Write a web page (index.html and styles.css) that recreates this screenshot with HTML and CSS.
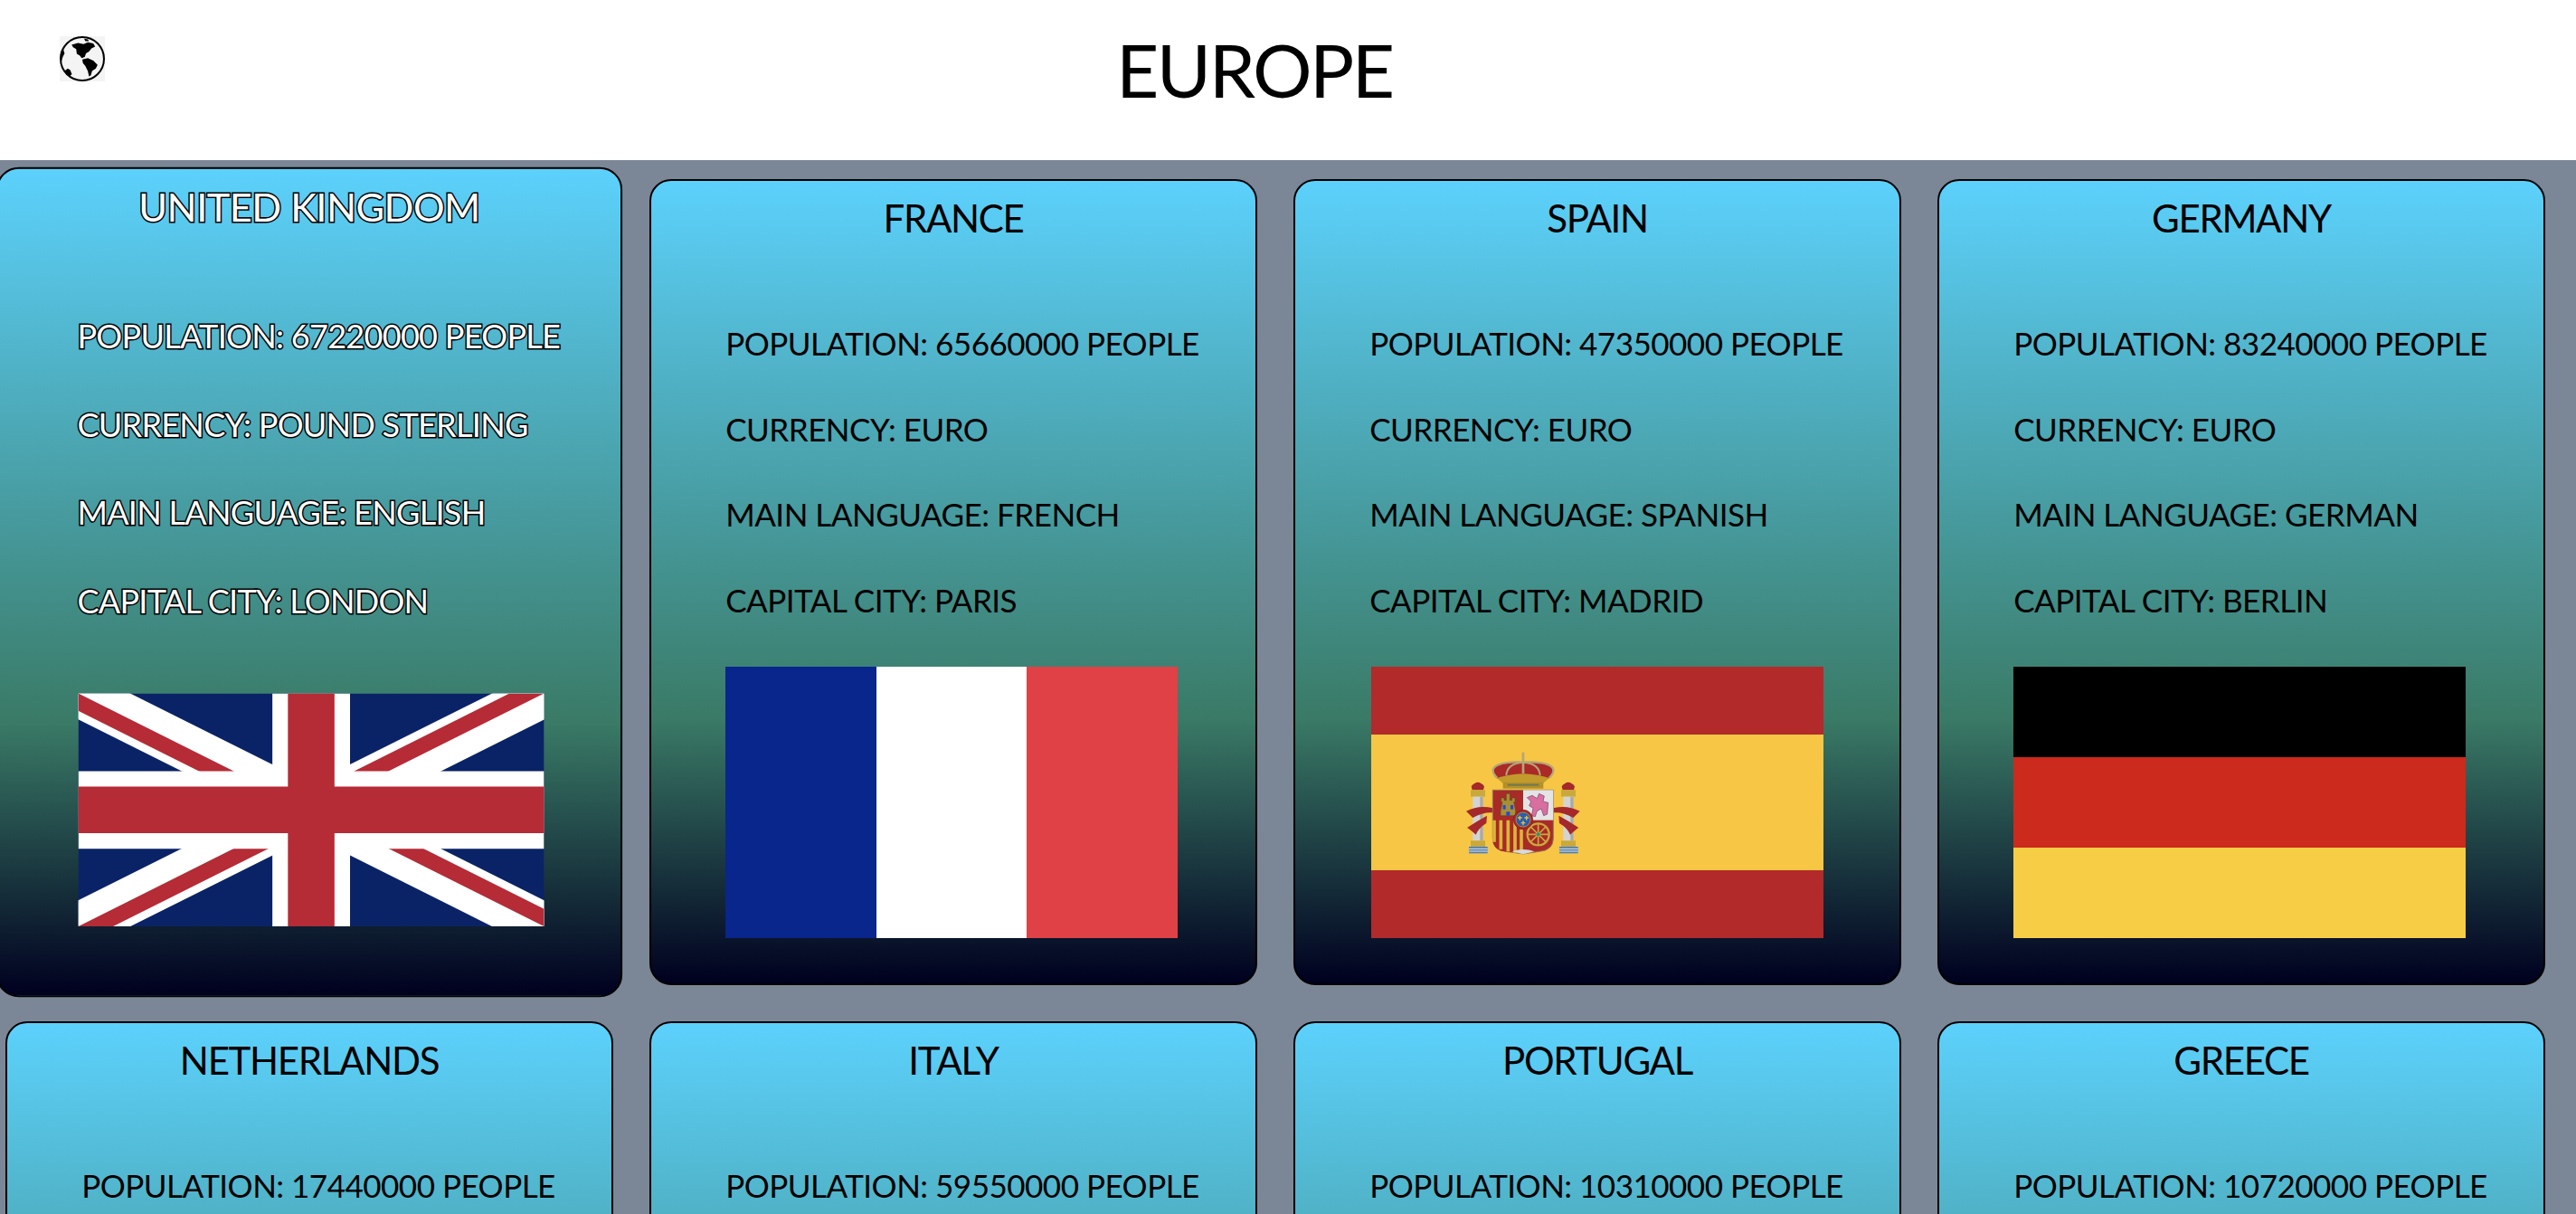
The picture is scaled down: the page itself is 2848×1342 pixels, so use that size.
FILE: index.html
```html
<!DOCTYPE html>
<html>
<head>
<title>Europe</title>
<link rel="stylesheet" href="styles.css">
</head>
<body>

<header class="topbar">
  <svg class="globe" viewBox="80 62 148 148">
    <rect x="80" y="62" width="148" height="148" fill="#f4f4f4"/>
    <circle cx="154" cy="136" r="71" fill="#f4f4f4" stroke="#000" stroke-width="6"/>
    <path d="M119 90 L140 84 L158 88 L172 82 L190 86 L196 96 L184 102 L176 112 L166 118 L162 130 L152 134 L146 126 L136 120 L134 104 L124 98 Z" fill="#000"/>
    <path d="M154 138 L172 134 L190 142 L204 156 L198 168 L186 176 L182 190 L176 194 L172 176 L164 160 L156 150 Z" fill="#000"/>
    <path d="M84 112 L92 106 L96 118 L90 130 L86 144 L82 132 Z" fill="#000"/>
    <path d="M96 176 L106 168 L114 172 L120 186 L112 194 L102 188 Z" fill="#000"/>
    <path d="M160 70 L172 72 L176 78 L164 78 Z" fill="#000"/>
  </svg>
  <h1 class="pagetitle">EUROPE</h1>
</header>

<main class="countries">

  <section class="card card-hover">
    <h2 class="cardname">UNITED KINGDOM</h2>
    <ul class="facts">
      <li>POPULATION: 67220000 PEOPLE</li>
      <li>CURRENCY: POUND STERLING</li>
      <li>MAIN LANGUAGE: ENGLISH</li>
      <li>CAPITAL CITY: LONDON</li>
    </ul>
    <div class="flagbox">
      <svg class="flag flag-uk" viewBox="0 0 60 30">
        <clipPath id="ukclip"><path d="M30 15H60V30ZV30H0ZH0V0ZV0H60Z"/></clipPath>
        <rect width="60" height="30" fill="#0a2366"/>
        <path d="M0 0L60 30M60 0L0 30" stroke="#fff" stroke-width="6"/>
        <path d="M0 0L60 30M60 0L0 30" stroke="#b52b36" stroke-width="4" clip-path="url(#ukclip)"/>
        <path d="M30 0V30M0 15H60" stroke="#fff" stroke-width="10"/>
        <path d="M30 0V30M0 15H60" stroke="#b52b36" stroke-width="6"/>
      </svg>
    </div>
  </section>

  <section class="card">
    <h2 class="cardname">FRANCE</h2>
    <ul class="facts">
      <li>POPULATION: 65660000 PEOPLE</li>
      <li>CURRENCY: EURO</li>
      <li>MAIN LANGUAGE: FRENCH</li>
      <li>CAPITAL CITY: PARIS</li>
    </ul>
    <div class="flagbox"><div class="flag flag-fr"><i></i><i></i><i></i></div></div>
  </section>

  <section class="card">
    <h2 class="cardname">SPAIN</h2>
    <ul class="facts">
      <li>POPULATION: 47350000 PEOPLE</li>
      <li>CURRENCY: EURO</li>
      <li>MAIN LANGUAGE: SPANISH</li>
      <li>CAPITAL CITY: MADRID</li>
    </ul>
    <div class="flagbox">
      <svg class="flag" viewBox="0 0 500 300">
        <rect width="500" height="300" fill="#b22a2a"/>
        <rect y="75" width="500" height="150" fill="#f7c644"/>
        <g transform="translate(44 63) scale(.3333)">
          <!-- pillars -->
          <g id="pillar">
            <path d="M200 208 Q222 180 243 208 L240 220 H203 Z" fill="#a5282a"/>
            <rect x="198" y="220" width="48" height="22" fill="#c9a93c"/>
            <rect x="205" y="242" width="34" height="146" fill="#d3d3d3"/>
            <rect x="229" y="242" width="10" height="146" fill="#a9a9a9"/>
            <rect x="198" y="388" width="48" height="20" fill="#c9a93c"/>
            <rect x="192" y="408" width="62" height="22" fill="#4c7fb5"/>
            <path d="M192 415H254M192 423H254" stroke="#e8e8e8" stroke-width="3"/>
          </g>
          <use href="#pillar" x="300"/>
          <!-- ribbons -->
          <path d="M183 290 Q225 268 272 280 V295 Q240 292 205 312 Z" fill="#a5282a"/>
          <path d="M186 345 Q215 325 252 305 L250 330 Q225 345 215 368 Q195 350 186 345 Z" fill="#a5282a"/>
          <path d="M560 290 Q518 268 472 280 V295 Q504 292 538 312 Z" fill="#a5282a"/>
          <path d="M556 345 Q528 325 490 305 L492 330 Q518 345 528 368 Q548 350 556 345 Z" fill="#a5282a"/>
          <!-- shield -->
          <path d="M271 220H472V380Q472 420 425 424L372 432 315 424Q271 420 271 380Z" fill="#a92a27" stroke="#8f7b4e" stroke-width="3"/>
          <rect x="372" y="220" width="100" height="100" fill="#e4e4e4"/>
          <path d="M271 320H372V430L315 424Q271 420 271 380Z" fill="#a92a27"/>
          <path d="M276 320V392M298 320V416M322 320V424M345 320V428M366 350V428" stroke="#d9b53a" stroke-width="11" fill="none"/>
          <!-- castle -->
          <path d="M297 305V290L303 260H299V246H309V254H316V232H328V254H335V246H345V260H341L347 290V305Z" fill="#a88f34" stroke="#5e5222" stroke-width="2"/>
          <rect x="305" y="270" width="9" height="14" fill="#2448d8"/>
          <rect x="330" y="270" width="9" height="14" fill="#2448d8"/>
          <rect x="316" y="292" width="12" height="13" fill="#2448d8"/>
          <!-- lion -->
          <path d="M385 245 L402 238 L418 248 L425 232 L442 240 L438 258 L455 262 L452 300 L440 305 L432 282 L418 290 L412 308 L400 305 L405 280 L392 272 L398 258 Z" fill="#d86f9f" stroke="#7a3a6a" stroke-width="2"/>
          <!-- navarre chain -->
          <circle cx="422" cy="367" r="36" fill="none" stroke="#c9a93c" stroke-width="7"/>
          <path d="M422 331V403M386 367H458M397 342L447 392M447 342L397 392" stroke="#c9a93c" stroke-width="5"/>
          <circle cx="422" cy="367" r="6" fill="#2f8f7a"/>
          <!-- bottom point -->
          <path d="M335 424Q372 410 410 424L372 433Z" fill="#d9d9d9"/>
          <!-- center -->
          <circle cx="372" cy="318" r="32" fill="#a92a27" stroke="#6f1e1e" stroke-width="2"/>
          <circle cx="372" cy="318" r="24" fill="#2a5db0" stroke="#c9a93c" stroke-width="2"/>
          <path d="M361 305V320M383 305V320M372 322V337M354 312H368M376 312H390M365 329H379" stroke="#e6c13c" stroke-width="4"/>
          <!-- crown -->
          <path d="M280 178Q262 150 290 136 320 125 372 128 425 125 455 136 485 150 462 178L440 192H305Z" fill="#a92a27"/>
          <path d="M286 180Q256 150 290 136 320 125 372 128 425 125 455 136 488 150 458 180" fill="none" stroke="#b4a678" stroke-width="7"/>
          <path d="M372 128Q318 132 316 172M372 128Q426 132 428 172" fill="none" stroke="#b4a678" stroke-width="6"/>
          <path d="M372 95V165" stroke="#b4a678" stroke-width="8"/>
          <path d="M285 180Q325 168 372 166 420 168 458 180L438 198H305Z" fill="#c29b2c"/>
          <rect x="305" y="195" width="134" height="20" fill="#b58f28"/>
          <rect x="320" y="200" width="104" height="6" fill="#6b7a52"/>
        </g>
      </svg>
    </div>
  </section>

  <section class="card">
    <h2 class="cardname">GERMANY</h2>
    <ul class="facts">
      <li>POPULATION: 83240000 PEOPLE</li>
      <li>CURRENCY: EURO</li>
      <li>MAIN LANGUAGE: GERMAN</li>
      <li>CAPITAL CITY: BERLIN</li>
    </ul>
    <div class="flagbox"><div class="flag flag-de"><i></i><i></i><i></i></div></div>
  </section>

  <section class="card">
    <h2 class="cardname">NETHERLANDS</h2>
    <ul class="facts">
      <li>POPULATION: 17440000 PEOPLE</li>
      <li>CURRENCY: EURO</li>
      <li>MAIN LANGUAGE: DUTCH</li>
      <li>CAPITAL CITY: AMSTERDAM</li>
    </ul>
  </section>

  <section class="card">
    <h2 class="cardname">ITALY</h2>
    <ul class="facts">
      <li>POPULATION: 59550000 PEOPLE</li>
      <li>CURRENCY: EURO</li>
      <li>MAIN LANGUAGE: ITALIAN</li>
      <li>CAPITAL CITY: ROME</li>
    </ul>
  </section>

  <section class="card">
    <h2 class="cardname">PORTUGAL</h2>
    <ul class="facts">
      <li>POPULATION: 10310000 PEOPLE</li>
      <li>CURRENCY: EURO</li>
      <li>MAIN LANGUAGE: PORTUGUESE</li>
      <li>CAPITAL CITY: LISBON</li>
    </ul>
  </section>

  <section class="card">
    <h2 class="cardname">GREECE</h2>
    <ul class="facts">
      <li>POPULATION: 10720000 PEOPLE</li>
      <li>CURRENCY: EURO</li>
      <li>MAIN LANGUAGE: GREEK</li>
      <li>CAPITAL CITY: ATHENS</li>
    </ul>
  </section>

</main>

</body>
</html>
```

FILE: styles.css
```css
html, body { margin: 0; height: 100%; overflow: hidden; }
body { background: #7b8797; color: #000; font-family: "Lato", "Liberation Sans", sans-serif; }

.topbar { display: flex; align-items: flex-start; height: 177px; background: #fff; padding-left: 66px; box-sizing: border-box; }
.globe { display: block; width: 50px; height: 50px; margin-top: 40px; }
.pagetitle { margin: 26px 0 0 1118px; font-size: 82px; line-height: 100px; font-weight: 400; letter-spacing: -2.5px; }

.countries { display: grid; grid-template-columns: repeat(4, 672px); gap: 40px; padding: 21px 34px 40px 6px; }

.card { box-sizing: border-box; height: 891px; border: 2px solid #000; border-radius: 24px;
        background: linear-gradient(#5cd1fc, #3a7a66 67%, #00001f); }
.card-hover { transform: scale(1.03); color: #fff; }
.card-hover .cardname, .card-hover .facts { -webkit-text-stroke: 3px #000; paint-order: stroke fill; }
.card-hover .cardname { letter-spacing: -.5px; }
.card-hover .facts { letter-spacing: -.7px; }

.cardname { margin: 0; padding-top: 16px; text-align: center; font-size: 42px; line-height: 50px; font-weight: 400; letter-spacing: -1.3px; }

.facts { display: flex; flex-direction: column; gap: 54.5px; width: fit-content; margin: 93px auto 0; padding: 0 0 0 20px; list-style: none;
         font-size: 35px; line-height: 40px; letter-spacing: -.5px; }

.flagbox { display: flex; justify-content: center; margin-top: 54px; }
.flag { display: block; width: 500px; height: 300px; }
.flag-uk { height: 250px; margin: 26px 0 24px 4px; }
.flag-fr { display: flex; margin-left: -4px; }
.flag-fr i { flex: 1; }
.flag-fr i:nth-child(1) { background: #08268c; }
.flag-fr i:nth-child(2) { background: #fff; }
.flag-fr i:nth-child(3) { background: #df4146; }
.flag-de { display: flex; flex-direction: column; margin-left: -4px; }
.flag-de i { flex: 1; }
.flag-de i:nth-child(1) { background: #000; }
.flag-de i:nth-child(2) { background: #cc2a1c; }
.flag-de i:nth-child(3) { background: #f7cd46; }
```
